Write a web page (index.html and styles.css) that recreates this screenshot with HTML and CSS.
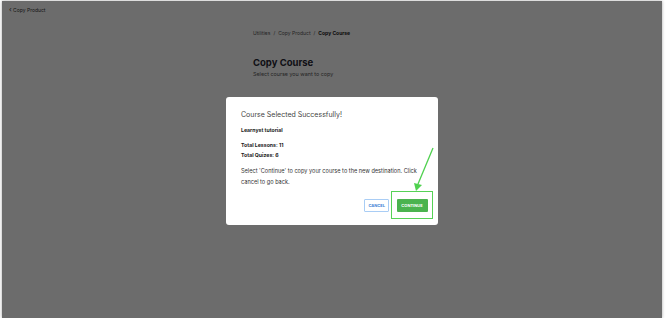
FILE: index.html
```html
<!DOCTYPE html>
<html lang="en">
  <head>
    <meta charset="UTF-8">
    <meta name="viewport" content="width=device-width, initial-scale=1.0">
    <title>Copy Course</title>
    <link rel="stylesheet" href="styles.css">
  </head>
  <body>
    <div class="frame">
      <div class="topbar">
        <span class="back">&#8249;</span> Copy Product
      </div>

      <div class="content">
        <div class="breadcrumb">
          <span>Utilities</span>
          <span class="sep">/</span>
          <span>Copy Product</span>
          <span class="sep">/</span>
          <span class="current">Copy Course</span>
        </div>
        <h1>Copy Course</h1>
        <p class="subtitle">Select course you want to copy</p>
      </div>

      <div class="overlay">
        <div class="modal">
          <h2>Course Selected Successfully!</h2>
          <p class="course-name">Learnyst tutorial</p>
          <p class="stat">Total Lessons: 11</p>
          <p class="stat">Total Quizes: 6</p>
          <p class="message">Select 'Continue' to copy your course to the new destination. Click cancel to go back.</p>
          <div class="actions">
            <button class="btn btn-cancel">Cancel</button>
            <span class="highlight">
              <button class="btn btn-continue">Continue</button>
            </span>
          </div>
        </div>
      </div>

      <!-- annotation arrow -->
      <svg class="arrow" width="670" height="322" viewBox="0 0 670 322">
        <line x1="433" y1="148" x2="418" y2="184" stroke="#4fd14f" stroke-width="1.3"/>
        <polygon points="414,183 422,185 416,191" fill="#4fd14f"/>
      </svg>
    </div>
  </body>
</html>
```

FILE: styles.css
```css
body {
  margin: 0;
  background-color: #fff;
  font-family: Inter, "Noto Sans", sans-serif;
  color: #262633;
}

.frame {
  position: relative;
  margin: 1px 8px 0 2px;
  height: 317px;
  background-color: #f6f6f6;
  box-shadow: 0 0 3px rgba(0, 0, 0, 0.35);
  overflow: hidden;
}

.topbar {
  padding: 6px 7px;
  font-size: 5px;
  color: #333;
  height: 6px;
  line-height: 6px;
}

.back {
  font-size: 7px;
}

.content {
  padding: 11px 0 0 251px;
}

.breadcrumb {
  font-size: 5px;
  color: #555;
  display: flex;
  gap: 3px;
}

.breadcrumb .current {
  color: #222;
  font-weight: 700;
}

h1 {
  margin: 21px 0 0;
  font-size: 9.5px;
  font-weight: 700;
  color: #262633;
}

.subtitle {
  margin: 3px 0 0;
  font-size: 5.4px;
  color: #555;
}

.overlay {
  position: absolute;
  inset: 0;
  background-color: rgba(0, 0, 0, 0.56);
  display: flex;
  justify-content: center;
  align-items: flex-start;
  padding-top: 96px;
}

.modal {
  width: 212px;
  height: 128px;
  box-sizing: border-box;
  background-color: #fff;
  border-radius: 3px;
  padding: 13px 15px 0;
}

h2 {
  margin: 0;
  font-size: 7px;
  font-weight: 400;
  color: #444;
}

.course-name {
  margin: 8px 0 0;
  font-size: 5.2px;
  font-weight: 700;
  color: #222;
}

.stat {
  margin: 0;
  font-size: 5.2px;
  font-weight: 700;
  color: #222;
  line-height: 10px;
}

.course-name + .stat {
  margin-top: 7px;
}

.message {
  margin: 6px 0 0;
  font-size: 5.6px;
  line-height: 11px;
  color: #333;
  max-width: 182px;
}

.actions {
  display: flex;
  justify-content: flex-end;
  align-items: center;
  gap: 2px;
  margin-top: 3px;
  margin-right: -10px;
}

.btn {
  font-family: inherit;
  font-size: 4px;
  font-weight: 700;
  text-transform: uppercase;
  border-radius: 1px;
  height: 13px;
  padding: 0 3px;
  cursor: pointer;
}

.btn-cancel {
  background-color: #fff;
  color: #3d7fd6;
  border: 1px solid #a9cdf5;
}

.highlight {
  display: inline-flex;
  align-items: center;
  justify-content: center;
  width: 42px;
  height: 28px;
  box-sizing: border-box;
  border: 1.5px solid #56d256;
}

.btn-continue {
  background-color: #4bb34f;
  color: #fff;
  border: none;
  width: 31px;
  padding: 0;
}

.arrow {
  position: absolute;
  left: -2px;
  top: -1px;
  pointer-events: none;
}
```
